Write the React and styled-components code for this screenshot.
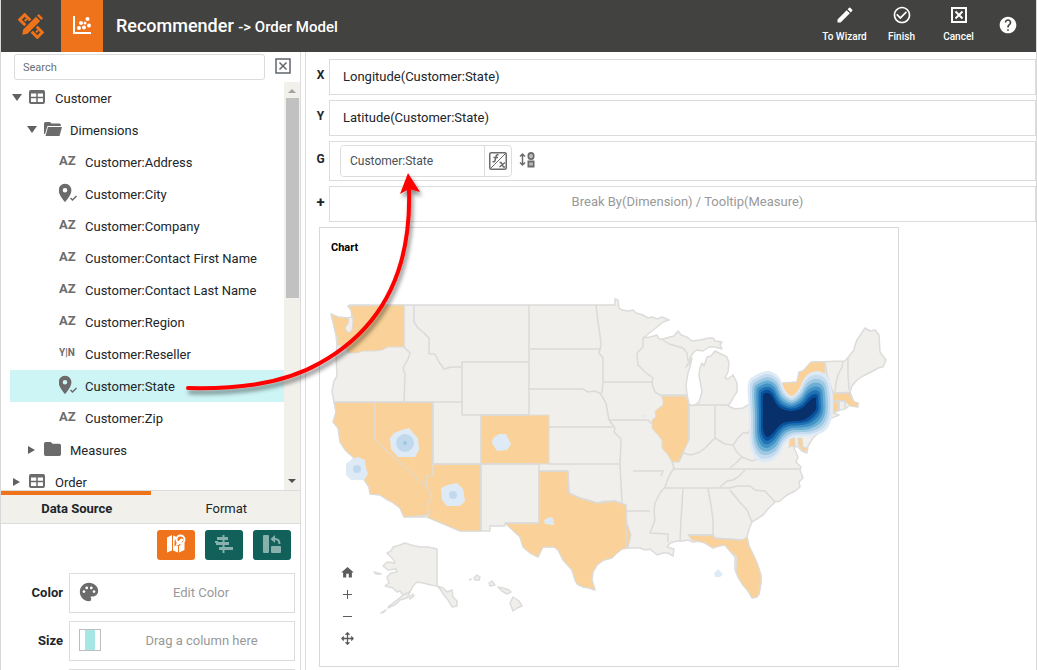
import { useState } from 'react';
import styled, { createGlobalStyle } from 'styled-components';
import {
    MdEdit,
    MdCheckCircleOutline,
    MdHelp,
    MdPalette,
    MdHome,
    MdFolder,
    MdLocationOn,
} from 'react-icons/md';

const GlobalStyle = createGlobalStyle`
    * {box-sizing: border-box;}

    body {
        margin: 0;
        background-color: #fff;
        color: #212529;
        font-family: Roboto, "Liberation Sans", sans-serif;
        font-size: 13px;
    }

    button, input {font-family: inherit;}

    button {
        padding: 0;
        border: none;
        background: none;
        color: inherit;
        cursor: pointer;
    }

    ul, h1, h2 {margin: 0; padding: 0; list-style: none;}
`;

const Page = styled.div`
    position: relative;
    display: flex;
    flex-direction: column;
    height: 100vh;
    min-height: 400px;
    overflow: hidden;
    border-left: 1px solid #d8d8d8;
    border-right: 1px solid #d8d8d8;
`;

/* ---------- header ---------- */

const Header = styled.header`
    display: flex;
    align-items: center;
    flex: 0 0 52px;
    padding-right: 8px;
    background-color: #424240;
    color: #fff;

    > h1 {
        flex: 1;
        padding-left: 13px;
        font-size: 18px;
        font-weight: 500;
        line-height: 50px;

        > small {font-size: 15px;}
    }
`;

const HeaderTab = styled.button`
    display: flex;
    align-items: center;
    justify-content: center;
    width: ${({ $active }) => ($active ? 42 : 60)}px;
    height: 52px;
    padding-bottom: ${({ $active }) => ($active ? 2 : 0)}px;
    background-color: ${({ $active }) => ($active ? '#ee731b' : 'transparent')};
    color: ${({ $active }) => ($active ? '#fff' : '#ee731b')};
`;

const HeaderButton = styled.button`
    display: flex;
    flex-direction: column;
    align-items: center;
    gap: 6px;
    width: 57px;
    padding-bottom: 4px;
    font-size: 10px;
    font-weight: 500;
    line-height: 12px;
    white-space: nowrap;

    > svg {height: 20px;}
`;

const HelpButton = styled(HeaderButton)`
    width: 41px;
    padding-bottom: 2px;
`;

/* ---------- layout ---------- */

const Body = styled.div`
    display: grid;
    grid-template-columns: 300px minmax(0, 1fr);
    flex: 1;
    min-height: 0;
`;

const Sidebar = styled.aside`
    display: flex;
    flex-direction: column;
    min-height: 0;
    border-right: 1px solid #dcdcdc;
`;

const Main = styled.main`
    min-height: 0;
    margin-left: 4px;
    padding: 7px 0 3px 10px;
    overflow: hidden;
    border-left: 1px solid #dcdcdc;
`;

/* ---------- data tree ---------- */

const SearchRow = styled.div`
    display: flex;
    align-items: center;
    gap: 10px;
    flex: 0 0 30px;
    padding: 0 9px 0 13px;

    > input {
        flex: 1;
        min-width: 0;
        height: 26px;
        padding: 0 8px;
        border: 1px solid #dcdcdc;
        border-radius: 3px;
        color: #333;
        font-size: 11px;
        outline: none;

        &::placeholder {color: #6c6f73; opacity: 1;}
    }

    > button {display: flex; padding: 0 0 2px; color: #5f666d;}
`;

const TreeArea = styled.div`
    display: flex;
    flex: 1;
    min-height: 0;
    overflow: hidden;
`;

const Tree = styled.ul`
    flex: 1;
    padding-left: 9px;
`;

const TreeRow = styled.button`
    display: flex;
    align-items: center;
    width: 100%;
    height: 32px;
    padding-left: ${({ $level }) => 2 + $level * 15}px;
    background-color: ${({ $selected }) => ($selected ? '#cdf5f6' : 'transparent')};
    font-size: 13px;
    white-space: nowrap;
`;

const CaretSlot = styled.span`
    display: flex;
    width: 10px;
    margin-right: 7px;
`;

const IconSlot = styled.span`
    display: flex;
    width: 19px;
    margin-right: 7px;
    padding-bottom: 2px;
    color: #6b6b6b;
`;

const TypeMark = styled.span`
    font-size: ${({ $small }) => ($small ? 10 : 13)}px;
    font-weight: 700;
    line-height: 18px;
    white-space: nowrap;
`;

const ScrollBar = styled.div`
    display: flex;
    flex-direction: column;
    align-items: center;
    justify-content: space-between;
    width: 16px;
    padding: 6px 0;
    background-color: #f1f0eb;

    > span {
        width: 13px;
        height: 200px;
        margin: 5px 0 auto;
        background-color: #c1c1c1;
    }
`;

/* ---------- bottom panel ---------- */

const Panel = styled.section`
    flex: 0 0 180px;
    overflow: hidden;
    border-top: 1px solid #dcdcdc;
`;

const Tabs = styled.div`
    display: grid;
    grid-template-columns: 1fr 1fr;
    border-bottom: 1px solid #dcdcdc;
    background-color: #f1f0eb;
`;

const Tab = styled.button`
    height: 32px;
    padding: 0 0 2px 2px;
    border-top: 4px solid ${({ $active }) => ($active ? '#ee731b' : 'transparent')};
    font-size: 13px;
    font-weight: ${({ $active }) => ($active ? 700 : 400)};
`;

const ToolRow = styled.div`
    display: flex;
    justify-content: flex-end;
    gap: 10px;
    padding: 6px 9px 13px;
`;

const ToolButton = styled.button`
    display: flex;
    align-items: center;
    justify-content: center;
    width: 38px;
    height: 30px;
    padding-bottom: 2px;
    border-radius: 3px;
    background-color: ${({ $active }) => ($active ? '#ee731b' : '#11605a')};
    color: ${({ $active }) => ($active ? '#fff' : '#88b0ad')};
`;

const FieldRow = styled.div`
    display: flex;
    align-items: center;
    gap: 6px;
    margin-bottom: 8px;
    padding-right: 5px;

    > span {
        width: 62px;
        padding-bottom: 2px;
        font-weight: 700;
        text-align: right;
    }
`;

const FieldBox = styled.button`
    display: flex;
    align-items: center;
    flex: 1;
    height: 40px;
    padding: 0 0 2px 8px;
    border: 1px solid #dcdcdc;
    color: #999;
    font-size: 13px;

    > em {flex: 1; padding-left: 8px; font-style: normal;}
    > svg {flex: none; color: #6b6b6b;}
`;

const SizeSwatch = styled.i`
    width: 22px;
    height: 22px;
    margin-left: 1px;
    border: 1px solid #bdbdbd;
    background: linear-gradient(90deg, #fff 5px, #a6e7e5 5px, #a6e7e5 15px, #fff 15px);
`;

/* ---------- bindings ---------- */

const Binding = styled.div`
    display: grid;
    grid-template-columns: 13px minmax(0, 1fr);
    align-items: center;
    margin-bottom: 5px;

    > b {
        padding: 0 4px 4px 0;
        font-size: ${({ $plus }) => ($plus ? 15 : 12)}px;
        line-height: 14px;
        text-align: center;
    }
`;

const DropBox = styled.div`
    display: flex;
    align-items: center;
    justify-content: ${({ $empty }) => ($empty ? 'center' : 'flex-start')};
    height: ${({ $tall }) => ($tall ? 40 : 36)}px;
    padding: ${({ $empty, $tall }) => ($empty ? '0 0 6px 10px' : $tall ? '0 10px' : '0 13px 2px')};
    border: 1px solid #dcdcdc;
    color: ${({ $empty }) => ($empty ? '#999' : '#212529')};
    font-size: 13px;
`;

const FieldGroup = styled.div`
    display: flex;
    height: 32px;
    overflow: hidden;
    border: 1px solid #dcdcdc;
    border-radius: 4px;

    > input {
        width: 144px;
        padding: 0 9px;
        border: none;
        border-right: 1px solid #dcdcdc;
        color: #495057;
        font-size: 12px;
        outline: none;
    }

    > button {
        display: flex;
        align-items: center;
        justify-content: center;
        width: 26px;
    }
`;

const SortButton = styled.button`
    display: flex;
    margin-left: 7px;
    padding-bottom: 2px;
    color: #6b6b6b;
`;

/* ---------- chart ---------- */

const Chart = styled.section`
    position: relative;
    max-width: 580px;
    margin-left: 3px;
    border: 1px solid #d8d8d8;

    > h2 {
        height: 36px;
        padding-left: 11px;
        color: #000;
        font-size: 11px;
        font-weight: 700;
        line-height: 40px;
    }

    > svg {display: block; width: 100%; height: auto;}
`;

const MapControls = styled.div`
    position: absolute;
    left: 18px;
    bottom: 19px;
    display: flex;
    flex-direction: column;
    gap: 4px;
    color: #5c5c5c;

    > button {display: flex; align-items: center; justify-content: center; width: 18px; height: 18px;}
`;

const ArrowLayer = styled.svg`
    position: absolute;
    top: 0;
    left: -1px;
    pointer-events: none;
`;

/* ---------- icons ---------- */

// ruler outline with a solid pencil laid across it
const LogoIcon = () => (
    <svg width="26" height="26" viewBox="0 0 26 26" fill="none">
        <g transform="rotate(45 13 13)">
            <rect x="0.500" y="9.500" width="25" height="7" stroke="currentColor" strokeWidth="3" />
            <path d="M5 11v3M21 11v3" stroke="currentColor" strokeWidth="2" />
            <path d="M8.500-1.500h9v23L13 27l-4.500-5.500z" fill="#424240" />
            <path d="M10-1h6v2.500h-6zM10 3h6v18l-3 4.500L10 21z" fill="currentColor" />
        </g>
    </svg>
);

const CloseBox = ({ size, thick = 2 }) => (
    <svg width={size} height={size} viewBox="0 0 16 16" fill="none" stroke="currentColor" strokeWidth={thick}>
        <rect x="1" y="1" width="14" height="14" />
        <path d="M4.500 4.500l7 7M11.500 4.500l-7 7" />
    </svg>
);

const ScatterIcon = () => (
    <svg width="18" height="18" viewBox="0 0 18 18" fill="currentColor">
        <path d="M0 0h2v16h16v2H0z" />
        <circle cx="6" cy="12" r="2" />
        <circle cx="8" cy="7" r="2" />
        <circle cx="11" cy="11.500" r="2" />
        <circle cx="12" cy="7" r="1.500" />
        <circle cx="14.500" cy="3" r="2" />
        <circle cx="16" cy="9.500" r="2" />
    </svg>
);

const Caret = ({ open }) => (
    <svg width="10" height="9" viewBox="0 0 10 9" fill="#616161">
        <path d={open ? 'M0 0h10L5 7z' : 'M1 0l7 4-7 4z'} />
    </svg>
);

const TableIcon = () => (
    <svg width="16" height="14" viewBox="0 0 16 14" fill="none" stroke="currentColor">
        <rect x="1" y="1" width="14" height="12" rx="1" strokeWidth="2" />
        <path d="M1 2h14" strokeWidth="3" />
        <path d="M1 7.500h14M8 3v10" strokeWidth="1.500" />
    </svg>
);

const FolderOpenIcon = () => (
    <svg width="18" height="14" viewBox="0 0 18 14" fill="currentColor">
        <path d="M0 12V1.500Q0 0 1.500 0H6l1.500 1.500h8Q17 1.500 17 4H3.500L1 12z" />
        <path d="M4 5h14l-2.500 9H1.500z" />
    </svg>
);

const FolderIcon = () => (
    <svg width="17" height="14" viewBox="2 4 20 16" preserveAspectRatio="none">
        <MdFolder size={24} color="#6b6b6b" />
    </svg>
);

const GeoIcon = () => (
    <svg width="19" height="20" viewBox="0 0 19 20" fill="none">
        <MdLocationOn size={22} x={-5} y={-1} color="#6b6b6b" />
        <path d="M11.500 15l2 2 4-4" stroke="#6b6b6b" strokeWidth="1.500" />
    </svg>
);

const FormulaIcon = () => (
    <svg width="18" height="18" viewBox="0 0 18 18" fill="none" stroke="#6b6b6b">
        <rect x="0.750" y="0.750" width="16.500" height="16.500" rx="1.500" strokeWidth="1.500" />
        <path d="M1 17L17 1" />
        <path d="M9.500 3Q7.500 2 7 4.500L6 8.500Q5.500 10.500 3.500 9.500M4.500 5.500h4.500" strokeWidth="1.500" />
        <path d="M10.500 10.500h1.500l2.500 4.500h1.500M16 10.500l-5.500 4.500" strokeWidth="1.500" />
    </svg>
);

const SortIcon = () => (
    <svg width="16" height="16" viewBox="0 0 16 16" fill="none" stroke="currentColor">
        <path d="M3.500 2v11M1 4.500L3.500 2 6 4.500M1 10.500L3.500 13 6 10.500" strokeWidth="1.500" />
        <rect x="9.500" y="1" width="5" height="6" rx="2.500" strokeWidth="2" />
        <path d="M12 2.500v3" />
        <rect x="9.500" y="9.500" width="5" height="5" strokeWidth="2" />
        <path d="M12 10v4" />
    </svg>
);

const MapEditIcon = () => (
    <svg width="20" height="20" viewBox="0 0 20 20" fill="currentColor">
        <path d="M1 3.500L6 1v15.500L1 18.500zM7 1.500l5 2v15l-5-2zM13 10l5.500-3v9L13 18.500z" />
        <path d="M8.500 12V7L12 1h7v7l-6 4z" fill="#ee731b" />
        <circle cx="14.500" cy="5.500" r="4" fill="none" stroke="currentColor" strokeWidth="2" />
        <path d="M9.500 12l1-3 5-5 2 2-5 5z" />
    </svg>
);

const AlignIcon = () => (
    <svg width="18" height="18" viewBox="0 0 18 18" fill="currentColor">
        <path d="M7.500 0h2v18h-2zM2 2h11v3H2zM0 6h3v2H0zM1 7h13v3H1zM4 12h14v3H4z" />
    </svg>
);

const SwapIcon = () => (
    <svg width="18" height="18" viewBox="0 0 18 18" fill="currentColor">
        <rect x="0" y="0" width="6" height="18" rx="1" />
        <rect x="8" y="11" width="10" height="7" rx="1" />
        <path d="M7.500 4l4.500-4v3q5.500 0 5.500 6h-2q0-4-3.500-4v3z" />
    </svg>
);

const MoveIcon = () => (
    <svg width="13" height="13" viewBox="0 0 13 13" fill="none" stroke="currentColor" strokeWidth="1.300">
        <path d="M6.500 1v11M1 6.500h11M4.500 2.800l2-2 2 2M4.500 10.200l2 2 2-2M2.800 4.500l-2 2 2 2M10.200 4.500l2 2-2 2" />
    </svg>
);

/* ---------- map shapes ---------- */

const COUNTRY =
    'M348 306L350 305 615 305 615 299 618 300 619 308 622 310 628 311 633 310 636 313 643 315 648 318 652 317 657 319 662 317 669 320 663 322 657 327 643 338 650 337 657 335 659 339 663 339 670 337 674 336 678 331 681 335 687 337 692 341 700 340 709 338 713 338 715 341 722 342 720 345 722 349 715 347 709 347 703 351 697 350 693 353 690 358 689 362 686 367 690 362 692 358 690 367 688 373 686 385 687 395 689 404 693 406 699 402 702 392 699 375 700 368 702 363 704 366 707 357 711 356 715 351 721 354 727 357 729 363 728 372 725 378 728 379 733 375 737 383 737 392 734 396 732 400 728 406 735 409 743 408 750 404 760 395 777 386 783 383 797 382 799 372 803 371 811 362 845 361 850 355 854 350 855 345 857 340 865 328 870 331 875 330 879 335 880 352 883 356 886 360 883 367 878 368 873 371 869 373 863 376 857 380 852 386 850 392 852 397 854 402 858 403 858 407 852 406 850 405 845 409 840 410 833 413 839 415 827 420 822 430 813 438 808 446 807 453 802 451 797 446 794 448 798 457 796 462 801 467 800 470 803 478 799 482 800 487 795 491 787 495 780 501 775 502 768 509 763 515 752 522 749 529 747 537 749 546 753 554 757 563 761 575 761 583 759 594 757 597 752 598 748 591 743 585 738 577 735 570 735 557 729 550 725 545 719 546 713 548 705 543 700 541 693 542 688 540 683 541 677 541 670 543 667 547 674 549 673 556 668 553 663 553 657 555 650 549 645 550 640 548 628 548 622 549 617 553 612 558 604 560 597 565 593 572 592 580 595 590 589 588 583 587 577 584 575 580 572 570 563 560 558 550 554 547 543 547 538 557 530 553 523 547 520 537 505 523 505 526 490 526 490 531 460 531 427 517 404 517 400 508 392 502 386 499 380 495 370 494 369 487 363 478 357 468 353 457 346 451 340 442 338 428 333 422 336 412 334 402 332 391 334 381 337 376 336 355 337 345 336 335 333 322 331 314 338 317 348 318 352 317 351 310z';

const SHADED = {
    washington:
        'M348 306L404 305 404 347 388 347 382 350 375 351 363 351 357 353 349 353 346 347 337 345 338 338 336 335 333 322 331 314 338 317 348 318 349 322 345 328 348 333 352 330 353 320 351 310z',
    california:
        'M334 402L375 402 375 440 427 487 432 497 427 505 429 515 404 517 400 508 392 502 386 499 380 495 370 494 369 487 363 478 357 468 353 457 346 451 340 442 338 428 333 422 336 412z',
    nevada: 'M375 402L433 402 433 475 427 476 427 487 375 440z',
    arizona: 'M433 464L481 464 481 531 460 531 427 517 429 515 427 505 432 497 427 487 427 476 433 475z',
    colorado: 'M481 415L549 415 549 464 481 464z',
    texas:
        'M539 471L568 471 569 493 575 496 580 498 589 500 597 503 604 501 615 501 626 505 627 523 631 535 628 548 622 549 617 553 612 558 604 560 597 565 593 572 592 580 595 590 589 588 583 587 577 584 575 580 572 570 563 560 558 550 554 547 543 547 538 557 530 553 523 547 520 537 505 523 539 523z',
    illinois:
        'M661 396L686 396 689 405 689 440 683 453 679 462 672 462 668 455 662 448 662 440 652 428 652 420 656 417 655 411 663 405 663 400z',
    florida:
        'M688 535L713 535 715 538 742 540 747 537 749 546 753 554 757 563 761 575 761 583 759 594 757 597 752 598 748 591 743 585 738 577 736 570 737 557 729 550 725 545 719 546 713 548 705 543 692 540z',
    newYork: 'M783 383L797 382 799 372 803 371 811 362 825 362 825 385 818 410 780 400 777 386z',
    massachusetts: 'M833 393L850 392 851 397 854 402 858 403 857 407 850 406 845 401 833 401z',
    connecticut: 'M833 402L839 402 839 410 833 412z',
    maryland: 'M790 438L795 438 795 447 791 446 789 448zM798 438L802 438 803 447 808 448 805 452 802 450 798 444z',
};

const BORDERS = [
    'M404 305V347L410 353 408 359 403 368 405 374 404 402',
    'M414 305V322L418 328 424 333 429 338 429 354 435 354 439 362 444 369 451 367 461 367',
    'M334 402H462V362H529M462 402V415H529M529 305V415',
    'M433 402V464H481V531M481 415V464H539V523H505',
    'M530 349H601M596 305L598 322 600 335 601 345 599 353 603 358 603 382 602 393',
    'M529 389H583L588 392 594 391 600 393 606 403 609 420 615 428 614 432 621 439 620 464 622 503',
    'M549 427H613M549 464H619M603 382H652M609 420H648L652 424',
    'M643 338V347L637 353 638 365 645 372 653 378 652 384 655 392 660 395H687',
    'M663 340L669 344 676 346 683 348 687 353 688 361',
    'M689 405V440M693 405H728M715 406V438',
    'M679 462L683 453 691 455 700 452 705 448 710 443 715 438 720 441 725 444 733 445 738 438 743 433 748 433 753 425',
    'M733 445L736 451 742 457 736 463 730 468M742 457L752 461 760 458 770 450',
    'M539 471H568M568 471L569 493 580 498 597 503 615 501 626 505V548',
    'M633 471H663L661 476M672 462L674 468 669 476 665 487 660 493 655 503 654 511 655 520 650 533 668 534 668 542',
    'M627 511H650M674 469H800M664 488H730',
    'M683 489L681 520 680 541M708 489L711 505 713 520 713 535',
    'M720 487L727 481 733 480 738 477 745 470M730 488L737 486 750 486 755 490 765 491 775 502',
    'M730 490L738 500 747 510 752 522M688 535H713L715 538 742 540',
    'M825 362L827 375 833 393H850M843 361L842 367 838 375 836 383 835 392M848 358L848 375 849 390',
    'M833 401H845V408M839 402V410M346 347L348 353',
];

const ISLANDS = [
    'M437 549V586L431 585 423 583 417 582 413 586 410 592 403 595 400 591 397 592 393 588 385 586 389 583 387 577 391 573 397 572 396 569 388 570 383 566 387 562 395 563 393 559 387 553 391 551 393 547 400 545 405 543 411 545 420 547 428 547z',
    'M437 586L443 588 447 592 452 590 453 597 457 601 457 606 452 607 448 600 444 595 440 589z',
    'M410 592L407 598 400 600 396 604 388 608 389 606 397 600 403 595zM381 613L386 610 384 612z',
    'M409 597L413 594 414 596 410 599zM374 572L381 574 376 574z',
    'M474 578L477 575 480 577 479 580 475 580zM469 580L472 579M489 583L492 581 495 585 490 586z',
    'M498 587L503 588 509 590 511 592 507 594 502 591z',
    'M513 597L519 601 522 606 517 608 513 611 510 603z',
];

const HEAT_COLORS = ['#deebf7', '#c6dbef', '#9ecae1', '#6baed6', '#4292c6', '#2171b5', '#08519c', '#08306b'];

const HEAT_OUTER = [
    [748, 384], [756, 375], [769, 371], [779, 377], [785, 390], [792, 396], [799, 389],
    [806, 376], [817, 371], [828, 377], [832, 393], [832, 416], [826, 430], [812, 436],
    [795, 437], [785, 444], [778, 456], [768, 462], [757, 460], [750, 445], [749, 415],
];

const HEAT_INNER = [
    [763, 397], [764, 394], [767, 393], [771, 395], [779, 407], [791, 411], [802, 408],
    [809, 401], [813, 398], [816, 398], [816, 403], [816, 409], [811, 415], [803, 420],
    [786, 422], [779, 426], [773, 433], [768, 437], [765, 435], [763, 428], [763, 412],
];

// closed spline that passes through every point
const heatPath = (ratio) => {
    const points = HEAT_OUTER.map(([x, y], i) => [
        x + (HEAT_INNER[i][0] - x) * ratio,
        y + (HEAT_INNER[i][1] - y) * ratio,
    ]);
    const at = (i) => points[(i + points.length) % points.length];
    const curves = points.map((p, i) => {
        const [before, next, after] = [at(i - 1), at(i + 1), at(i + 2)];
        const c1 = [p[0] + (next[0] - before[0]) / 6, p[1] + (next[1] - before[1]) / 6];
        const c2 = [next[0] - (after[0] - p[0]) / 6, next[1] - (after[1] - p[1]) / 6];
        return `C${c1.join(' ')} ${c2.join(' ')} ${next.join(' ')}`;
    });

    return `M${points[0].join(' ')}${curves.join('')}z`;
};

const UsMap = () => (
    <svg viewBox="320 264 578 402" role="img" aria-label="Customers by state">
        <g fill="#f0efeb" stroke="#dcdcdb" strokeWidth="1.500" strokeLinejoin="round">
            <path d={COUNTRY} />
            {ISLANDS.map((d) => <path key={d} d={d} />)}
        </g>
        <g fill="#fad299" stroke="#dcdcdb" strokeWidth="1">
            {Object.entries(SHADED).map(([name, d]) => <path key={name} d={d} />)}
        </g>
        <g fill="none" stroke="#dadada" strokeWidth="1.500" strokeLinejoin="round">
            {BORDERS.map((d) => <path key={d} d={d} />)}
        </g>
        <g>
            {HEAT_COLORS.map((color, i) => (
                <path key={color} d={heatPath(i / (HEAT_COLORS.length - 1))} fill={color} />
            ))}
        </g>
        <g fill="#deebf7">
            <path d="M394 433L402 430 409 428 413 433 418 438 419 450 415 457 398 457 391 449 390 438z" />
            <path d="M346 464L352 459 358 457 365 460 366 468 368 474 364 480 351 480 346 475z" />
            <path d="M441 488L448 485 457 483 463 489 465 501 460 506 447 506 442 500z" />
            <path d="M493 438L499 434 506 434 511 444 507 450 497 451 492 443z" />
            <path d="M544 520L550 517 553 518 554 525 545 524zM714 573L718 569 723 574 720 577 715 577zM643 415h4v2h-4z" />
        </g>
        <g fill="#c1d9ed">
            <circle cx="405" cy="443" r="9" />
            <circle cx="357" cy="469" r="4" />
            <circle cx="453" cy="495" r="4" />
        </g>
        <circle cx="405" cy="443" r="2" fill="#9ecae1" />
    </svg>
);

/* ---------- page ---------- */

const ROWS = [
    { label: 'Customer', level: 0, type: 'table', open: true },
    { label: 'Dimensions', level: 1, type: 'folderOpen', open: true },
    { label: 'Customer:Address', level: 2, type: 'text' },
    { label: 'Customer:City', level: 2, type: 'geo' },
    { label: 'Customer:Company', level: 2, type: 'text' },
    { label: 'Customer:Contact First Name', level: 2, type: 'text' },
    { label: 'Customer:Contact Last Name', level: 2, type: 'text' },
    { label: 'Customer:Region', level: 2, type: 'text' },
    { label: 'Customer:Reseller', level: 2, type: 'boolean' },
    { label: 'Customer:State', level: 2, type: 'geo' },
    { label: 'Customer:Zip', level: 2, type: 'text' },
    { label: 'Measures', level: 1, type: 'folder' },
    { label: 'Order', level: 0, type: 'table' },
];

const TYPE_ICONS = {
    table: <TableIcon />,
    folderOpen: <FolderOpenIcon />,
    folder: <FolderIcon />,
    geo: <GeoIcon />,
    text: <TypeMark>AZ</TypeMark>,
    boolean: <TypeMark $small>Y|N</TypeMark>,
};

const App = () => {
    const [selected, setSelected] = useState('Customer:State');
    const [tab, setTab] = useState('Data Source');

    return (
        <Page>
            <GlobalStyle />
            <Header>
                <HeaderTab aria-label="Composer"><LogoIcon /></HeaderTab>
                <HeaderTab $active aria-label="Chart"><ScatterIcon /></HeaderTab>
                <h1>Recommender <small>-&gt; Order Model</small></h1>
                <HeaderButton><MdEdit size={20} />To Wizard</HeaderButton>
                <HeaderButton><MdCheckCircleOutline size={20} />Finish</HeaderButton>
                <HeaderButton><CloseBox size={16} />Cancel</HeaderButton>
                <HelpButton aria-label="Help"><MdHelp size={20} /></HelpButton>
            </Header>
            <Body>
                <Sidebar>
                    <SearchRow>
                        <input type="text" placeholder="Search" aria-label="Search" />
                        <button aria-label="Clear search"><CloseBox size={16} thick={1.5} /></button>
                    </SearchRow>
                    <TreeArea>
                        <Tree>
                            {ROWS.map(({ label, level, type, open }) => (
                                <li key={label}>
                                    <TreeRow
                                        $level={level}
                                        $selected={selected === label}
                                        onClick={() => setSelected(label)}
                                    >
                                        <CaretSlot>{level < 2 && <Caret open={open} />}</CaretSlot>
                                        <IconSlot>{TYPE_ICONS[type]}</IconSlot>
                                        {label}
                                    </TreeRow>
                                </li>
                            ))}
                        </Tree>
                        <ScrollBar aria-hidden="true">
                            <svg width="8" height="5" viewBox="0 0 8 5" fill="#a3a3a3"><path d="M0 5l4-4 4 4z" /></svg>
                            <span />
                            <svg width="8" height="5" viewBox="0 0 8 5" fill="#505050"><path d="M0 0h8L4 4z" /></svg>
                        </ScrollBar>
                    </TreeArea>
                    <Panel>
                        <Tabs role="tablist">
                            {['Data Source', 'Format'].map((name) => (
                                <Tab
                                    key={name}
                                    role="tab"
                                    aria-selected={tab === name}
                                    $active={tab === name}
                                    onClick={() => setTab(name)}
                                >
                                    {name}
                                </Tab>
                            ))}
                        </Tabs>
                        <ToolRow>
                            <ToolButton $active aria-label="Edit geographic"><MapEditIcon /></ToolButton>
                            <ToolButton aria-label="Align"><AlignIcon /></ToolButton>
                            <ToolButton aria-label="Swap axes"><SwapIcon /></ToolButton>
                        </ToolRow>
                        <FieldRow>
                            <span id="color-label">Color</span>
                            <FieldBox aria-describedby="color-label"><MdPalette size={22} /><em>Edit Color</em></FieldBox>
                        </FieldRow>
                        <FieldRow>
                            <span id="size-label">Size</span>
                            <FieldBox aria-describedby="size-label"><SizeSwatch /><em>Drag a column here</em></FieldBox>
                        </FieldRow>
                        <FieldRow>
                            <span />
                            <FieldBox aria-label="Shape" />
                        </FieldRow>
                    </Panel>
                </Sidebar>
                <Main>
                    <Binding>
                        <b>X</b>
                        <DropBox>Longitude(Customer:State)</DropBox>
                    </Binding>
                    <Binding>
                        <b>Y</b>
                        <DropBox>Latitude(Customer:State)</DropBox>
                    </Binding>
                    <Binding>
                        <b>G</b>
                        <DropBox $tall>
                            <FieldGroup>
                                <input type="text" defaultValue="Customer:State" aria-label="Geographic field" />
                                <button aria-label="Edit formula"><FormulaIcon /></button>
                            </FieldGroup>
                            <SortButton aria-label="Convert to measure"><SortIcon /></SortButton>
                        </DropBox>
                    </Binding>
                    <Binding $plus>
                        <b>+</b>
                        <DropBox $empty>Break By(Dimension) / Tooltip(Measure)</DropBox>
                    </Binding>
                    <Chart>
                        <h2>Chart</h2>
                        <UsMap />
                        <MapControls>
                            <button aria-label="Reset view"><MdHome size={15} /></button>
                            <button aria-label="Zoom in">
                                <svg width="9" height="9" viewBox="0 0 9 9"><path d="M4.500 0v9M0 4.500h9" stroke="currentColor" /></svg>
                            </button>
                            <button aria-label="Zoom out">
                                <svg width="9" height="9" viewBox="0 0 9 9"><path d="M0 4.500h9" stroke="currentColor" /></svg>
                            </button>
                            <button aria-label="Pan"><MoveIcon /></button>
                        </MapControls>
                    </Chart>
                </Main>
            </Body>
            <ArrowLayer width="440" height="410" viewBox="0 0 440 410" aria-hidden="true">
                <defs>
                    <filter id="arrow-shadow" x="-10%" y="-10%" width="120%" height="120%">
                        <feDropShadow dx="2" dy="4" stdDeviation="2" floodColor="#000" floodOpacity="0.45" />
                    </filter>
                </defs>
                <g filter="url(#arrow-shadow)">
                    <path
                        d="M188 388C230 389 280 386 320 363C365 338 412 290 409 190"
                        fill="none"
                        stroke="#f00"
                        strokeWidth="4"
                        strokeLinecap="round"
                    />
                    <path d="M408 173L420 192 409 189 400 194z" fill="#f00" />
                </g>
            </ArrowLayer>
        </Page>
    );
};

export default App;
